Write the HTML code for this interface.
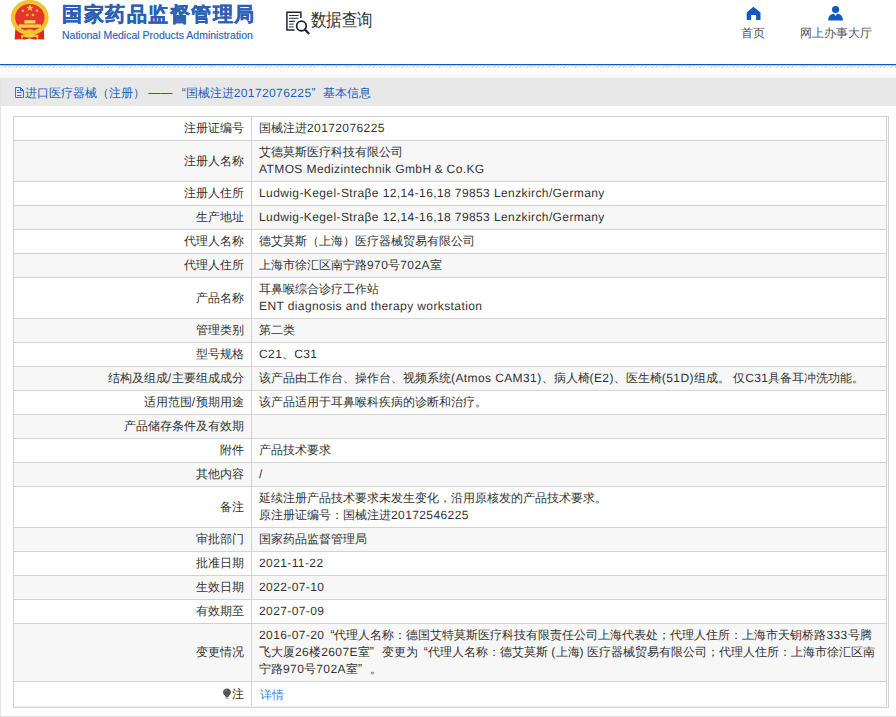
<!DOCTYPE html>
<html><head><meta charset="utf-8">
<style>
*{box-sizing:border-box}
html,body{margin:0;padding:0;background:#fff;width:896px;height:717px;overflow:hidden;font-family:"Liberation Sans",sans-serif;color:#333}
.abs{position:absolute}
#emblem{position:absolute;left:6px;top:0;width:46px;height:44px}
#t1{position:absolute;left:62px;top:3px;font-size:19.5px;line-height:22px;font-weight:bold;color:#2b60b6;white-space:nowrap;letter-spacing:1.5px;-webkit-text-stroke:0.4px #2b60b6;font-family:"Liberation Sans",sans-serif}
#t2{position:absolute;left:62px;top:29px;font-size:10.5px;color:#2d62b8;-webkit-text-stroke:0.15px #2d62b8;white-space:nowrap;font-family:"Liberation Sans",sans-serif}
#dq{position:absolute;left:282px;top:8px;width:32px;height:30px}
#dqt{position:absolute;left:310.5px;top:10px;font-size:18px;line-height:21px;transform:scaleX(0.86);transform-origin:0 0;color:#333;white-space:nowrap}
.navt{position:absolute;top:26px;font-size:12px;line-height:14px;color:#555;white-space:nowrap}
#line{position:absolute;left:0;top:64px;width:896px;height:2px;background:linear-gradient(#0a5bc4 0 1px,#b5cdee 1px 2px)}
#hatch{position:absolute;left:0;top:66px;width:896px;height:2px;background:repeating-linear-gradient(135deg,#fff 0 1.5px,#dedede 1.5px 2.6px)}
#shadow{position:absolute;left:0;top:72px;width:896px;height:6px;background:linear-gradient(#fff,#f4f4f4)}
#box{position:absolute;left:0;top:78px;width:900px;height:639px;border-left:1px solid #e4e4e4;border-bottom:1px solid #e4e4e4;background:#fff}
#bh{position:absolute;left:0;top:0;width:899px;height:28px;background:#e8e8e8;color:#1a5fbd;font-size:12px;line-height:28px;padding-top:1px;padding-left:24px;white-space:nowrap}
#doc{position:absolute;left:13px;top:8px;width:11px;height:13px}
q{quotes:none;display:inline-block;width:10px;text-align:right}
q.r{width:12px}
q.r{text-align:left}
#tb{position:absolute;left:13px;top:116px;width:876px;height:592px;border:1px solid #d2d2d2}
table{border-collapse:collapse;width:873px;font-size:12px;table-layout:fixed}
td{border-right:1px solid #d2d2d2;border-bottom:1px solid #d2d2d2;padding:3px 4px 3px 7.5px;white-space:nowrap;line-height:17px;color:#333;vertical-align:middle;overflow:hidden}
td.l{width:237px;text-align:right;padding-right:7px}
tr.h1 td{height:23px}
tr.h2 td{height:40px}
tr.h3 td{height:57px}
tr.e td{background:#f7f7f7}
tr.o td{background:#fff}
tr.last td{height:25px;border-bottom-color:#f1f1f4}
a{color:#2f86ee;text-decoration:none;position:relative;left:1px;top:1px}
i{font-style:normal;letter-spacing:0.4px;text-rendering:geometricPrecision}
.tip{display:inline-block;width:10px;height:11px;vertical-align:-1px;margin-right:0px}
</style></head><body>
<svg id="emblem" viewBox="0 0 46 44">
  <path d="M9.5 27 L37.8 27 L38.2 39.6 Q32 38.8 28 39.6 L23.5 38.4 L19 39.6 Q14 38.8 8.6 39.6 Z" fill="#e0261b"/>
  <ellipse cx="23.8" cy="17.6" rx="16.8" ry="15.6" fill="#e6362a" stroke="#f2c230" stroke-width="4.2"/>
  <polygon points="23.9,4.4 24.9,6.8 27.4,6.9 25.4,8.5 26.1,10.9 23.9,9.5 21.7,10.9 22.4,8.5 20.4,6.9 22.9,6.8" fill="#f4cf45"/>
  <circle cx="16.9" cy="10.7" r="1.3" fill="#eec23c"/><circle cx="31" cy="10.7" r="1.3" fill="#eec23c"/>
  <circle cx="21.2" cy="15" r="1.3" fill="#eec23c"/><circle cx="27" cy="15" r="1.3" fill="#eec23c"/>
  <rect x="18.4" y="20.2" width="11" height="3.3" fill="#f6d652"/>
  <rect x="12.8" y="24.4" width="22.4" height="3.3" fill="#f6d046"/>
  <ellipse cx="23.4" cy="31.2" rx="3.8" ry="2" fill="#f4c82e"/>
  <path d="M15 35.2 Q19 34 23.4 34.4 Q28 34 32.6 35.2 L31.8 39.4 L29.6 36.6 Q26 37.8 23.4 37.6 Q20.6 37.8 17.4 36.6 L15.6 39.4 Z" fill="#f2cf3c"/>
</svg>
<div id="t1">国家药品监督管理局</div>
<div id="t2">National Medical Products Administration</div>
<svg id="dq" viewBox="0 0 32 30">
  <path d="M12.6 22H4.9V4.3H18.9V10" fill="none" stroke="#23233a" stroke-width="1.5"/>
  <path d="M7.1 7.5H16.5M7.1 10.25H16.5M7.1 13.3H12.8" stroke="#2a2a40" stroke-width="1.2"/>
  <path d="M7.1 16.1H11.7M7.1 18.8H11.7" stroke="#5a5a6a" stroke-width="1.2"/>
  <circle cx="19.45" cy="17.95" r="4.8" fill="none" stroke="#23233a" stroke-width="1.8"/>
  <path d="M22.8 21.5L26.6 25.3" stroke="#23233a" stroke-width="2.3" stroke-linecap="round"/>
</svg>
<div id="dqt">数据查询</div>
<svg class="abs" style="left:746px;top:6px" width="15" height="15" viewBox="0 0 15 15"><path d="M0.7 6.4L7.4 0.7L14.5 6.4V14H10.1V9H5.1V14H0.7Z" fill="#1158c2"/></svg>
<div class="navt" style="left:741px">首页</div>
<svg class="abs" style="left:827px;top:5px" width="17" height="16" viewBox="0 0 17 16"><circle cx="8.6" cy="4.5" r="3.6" fill="#1158c2"/><path d="M1.2 15.4Q1.5 9 7 8.8L8.6 11L10.2 8.8Q15.6 9 15.9 15.4Z" fill="#1158c2"/></svg>
<div class="navt" style="left:800px">网上办事大厅</div>
<div id="line"></div>
<div id="hatch"></div>
<div id="shadow"></div>
<div id="box">
  <div id="bh"><svg id="doc" viewBox="0 0 11 13"><path d="M1.5 1.5H6.5L9.5 4.5V11.5H1.5Z" fill="none" stroke="#2a68c8" stroke-width="0.9"/><path d="M6.5 1.5V4.5H9.5" fill="none" stroke="#1a5fc4" stroke-width="1"/><path d="M3 4.5H5M3 6.5H7.5M3 9.5H7.5" stroke="#3b6fc9" stroke-width="1"/></svg>进口医疗器械（注册） —— <q>“</q>国械注进<i>20172076225</i><q class=r>”</q>基本信息</div>
</div>
<div id="tb"><table>
<tr class="o h1"><td class="l">注册证编号</td><td class="v">国械注进<i>20172076225</i></td></tr>
<tr class="e h2"><td class="l">注册人名称</td><td class="v">艾德莫斯医疗科技有限公司<br><i>ATMOS Medizintechnik GmbH</i> <i>&amp;</i> <i>Co.KG</i></td></tr>
<tr class="o h1"><td class="l">注册人住所</td><td class="v"><i>Ludwig-Kegel-Straβe 12,14-16,18 79853 Lenzkirch/Germany</i></td></tr>
<tr class="e h1"><td class="l">生产地址</td><td class="v"><i>Ludwig-Kegel-Straβe 12,14-16,18 79853 Lenzkirch/Germany</i></td></tr>
<tr class="o h1"><td class="l">代理人名称</td><td class="v">德艾莫斯（上海）医疗器械贸易有限公司</td></tr>
<tr class="e h1"><td class="l">代理人住所</td><td class="v">上海市徐汇区南宁路<i>970</i>号<i>702A</i>室</td></tr>
<tr class="o h2"><td class="l">产品名称</td><td class="v">耳鼻喉综合诊疗工作站<br><i>ENT diagnosis and therapy workstation</i></td></tr>
<tr class="e h1"><td class="l">管理类别</td><td class="v">第二类</td></tr>
<tr class="o h1"><td class="l">型号规格</td><td class="v"><i>C21</i>、<i>C31</i></td></tr>
<tr class="e h1"><td class="l">结构及组成<i>/</i>主要组成成分</td><td class="v">该产品由工作台、操作台、视频系统<i>(Atmos CAM31)</i>、病人椅<i>(E2)</i>、医生椅<i>(51D)</i>组成。 仅<i>C31</i>具备耳冲洗功能。</td></tr>
<tr class="o h1"><td class="l">适用范围<i>/</i>预期用途</td><td class="v">该产品适用于耳鼻喉科疾病的诊断和治疗。</td></tr>
<tr class="e h1"><td class="l">产品储存条件及有效期</td><td class="v"></td></tr>
<tr class="o h1"><td class="l">附件</td><td class="v">产品技术要求</td></tr>
<tr class="e h1"><td class="l">其他内容</td><td class="v"><i>/</i></td></tr>
<tr class="o h2"><td class="l">备注</td><td class="v">延续注册产品技术要求未发生变化，沿用原核发的产品技术要求。<br>原注册证编号：国械注进<i>20172546225</i></td></tr>
<tr class="e h1"><td class="l">审批部门</td><td class="v">国家药品监督管理局</td></tr>
<tr class="o h1"><td class="l">批准日期</td><td class="v"><i>2021-11-22</i></td></tr>
<tr class="e h1"><td class="l">生效日期</td><td class="v"><i>2022-07-10</i></td></tr>
<tr class="o h1"><td class="l">有效期至</td><td class="v"><i>2027-07-09</i></td></tr>
<tr class="e h3"><td class="l">变更情况</td><td class="v"><i>2016-07-20</i><q>“</q>代理人名称：德国艾特莫斯医疗科技有限责任公司上海代表处；代理人住所：上海市天钥桥路<i>333</i>号腾<br>飞大厦<i>26</i>楼<i>2607E</i>室<q class=r>”</q>变更为<q>“</q>代理人名称：德艾莫斯 <i>(</i>上海<i>)</i> 医疗器械贸易有限公司；代理人住所：上海市徐汇区南<br>宁路<i>970</i>号<i>702A</i>室<q class=r>”</q>。</td></tr>
<tr class="o h1 last"><td class="l"><svg class=tip viewBox='0 0 10 11'><path d='M5 0.6C2.7 0.6 1.1 2.3 1.1 4.4C1.1 6 2.2 7 3.3 8L3.5 9H6.5L6.7 8C7.8 7 8.9 6 8.9 4.4C8.9 2.3 7.3 0.6 5 0.6Z' fill='#555'/><path d='M3.6 10H6.4' stroke='#666' stroke-width='1'/><path d='M3 3.5Q3.6 2.2 5 2' stroke='#999' stroke-width='0.8' fill='none'/></svg>注</td><td class="v"><a>详情</a></td></tr>
</table></div>
</body></html>
